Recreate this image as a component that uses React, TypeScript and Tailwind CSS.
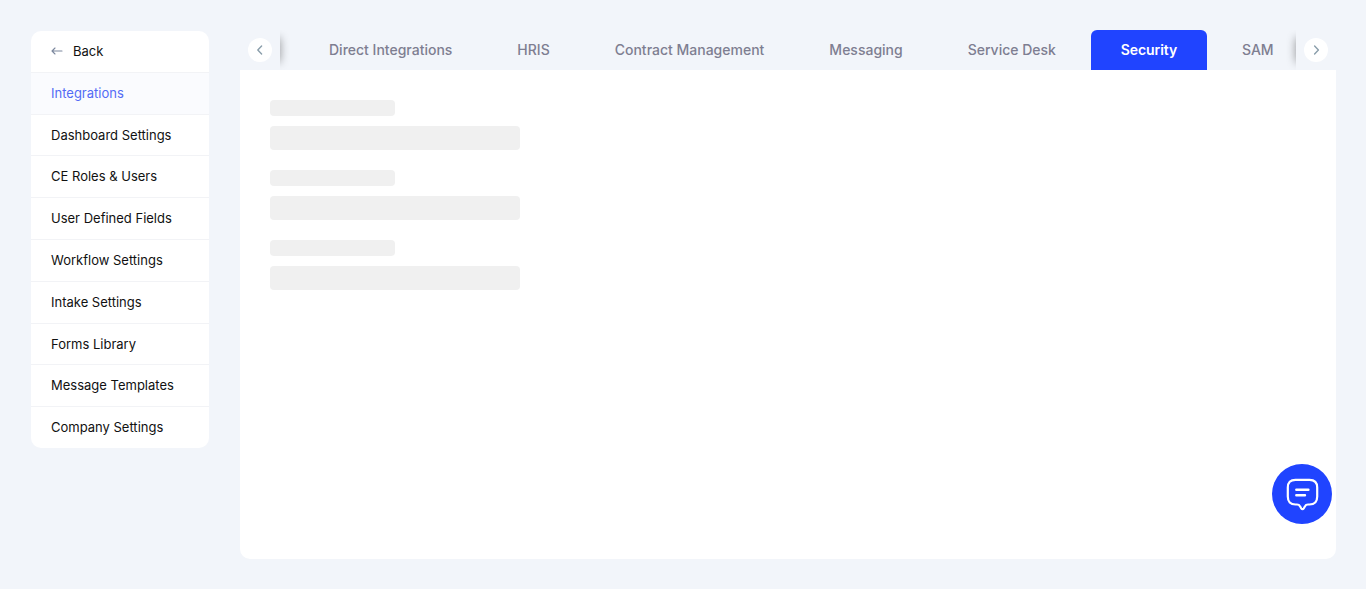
import React from "react";

const menu = [
  "Integrations",
  "Dashboard Settings",
  "CE Roles & Users",
  "User Defined Fields",
  "Workflow Settings",
  "Intake Settings",
  "Forms Library",
  "Message Templates",
  "Company Settings",
];

const tabs = [
  "Direct Integrations",
  "HRIS",
  "Contract Management",
  "Messaging",
  "Service Desk",
  "Security",
  "SAM",
];

function Chevron({ d }: { d: string }) {
  return (
    <button className="flex size-6 items-center justify-center rounded-full bg-white">
      <svg width="10" height="12" viewBox="0 0 10 12" fill="none" stroke="#8a9eab" strokeWidth="1.4" strokeLinecap="round" strokeLinejoin="round">
        <path d={d} />
      </svg>
    </button>
  );
}

function Sidebar() {
  return (
    <nav className="m-px w-[178px] shrink-0 self-start overflow-hidden rounded-[10px] bg-white text-[13px] leading-[20.8px] text-[#111]">
      <a className="flex items-center border-b border-[#f2f3f6] px-5 py-2.5">
        <svg className="mr-2.5" width="12" height="10" viewBox="0 0 12 10" fill="none" stroke="#7c889e" strokeWidth="1.1" strokeLinecap="round" strokeLinejoin="round">
          <path d="M11 5H1M4 2L1 5L4 8" />
        </svg>
        Back
      </a>
      {menu.map((m, i) => (
        <a
          key={m}
          className={
            "block border-[#f2f3f6] px-5 py-2.5 " +
            (i === 0 ? "bg-[#fafbfe] text-[#536bf5] " : "") +
            (i < menu.length - 1 ? "border-b" : "")
          }
        >
          {m}
        </a>
      ))}
    </nav>
  );
}

function TabBar() {
  return (
    <div className="flex h-10">
      <div className="flex w-10 shrink-0 items-center justify-center">
        <Chevron d="M6.6 2L2.8 6L6.6 10" />
      </div>
      <div className="relative flex min-w-0 flex-1 gap-[5px] overflow-hidden pl-[19px]">
        {tabs.map((t) => (
          <div
            key={t}
            className={
              "flex shrink-0 items-center text-sm whitespace-nowrap " +
              (t === "Security"
                ? "w-[116px] justify-center rounded-t-[6px] bg-[#2044ff] font-semibold tracking-[-0.05px] text-white"
                : "px-[30px] font-medium text-[#7e7e91]")
            }
          >
            {t}
          </div>
        ))}
        <div className="absolute top-2 -left-2.5 h-6 w-2.5 shadow-[0_0_10px_rgba(0,0,0,0.4)]" />
        <div className="absolute top-2 -right-2.5 h-6 w-2.5 shadow-[0_0_10px_rgba(0,0,0,0.4)]" />
      </div>
      <div className="flex w-10 shrink-0 items-center justify-center">
        <Chevron d="M3.6 2L7.4 6L3.6 10" />
      </div>
    </div>
  );
}

export default function App() {
  return (
    <div className="flex h-[589px] gap-[30px] bg-[#f2f5fa] p-[30px] font-['Inter',sans-serif]">
      <Sidebar />
      <main className="flex min-w-0 flex-1 flex-col">
        <TabBar />
        <section className="flex flex-1 flex-col gap-5 rounded-b-[10px] bg-white p-[30px]">
          {[0, 1, 2].map((i) => (
            <div key={i} className="flex flex-col gap-2.5">
              <div className="h-4 w-[125px] rounded bg-[#f0f0f0]" />
              <div className="h-6 w-[250px] rounded bg-[#f0f0f0]" />
            </div>
          ))}
        </section>
      </main>
      <button className="fixed top-[464px] left-[1272px] flex size-[60px] items-center justify-center rounded-full bg-[#2044ff]">
        <svg width="34" height="34" viewBox="0 0 34 34" fill="none" stroke="white" strokeWidth="2.2" strokeLinecap="round" strokeLinejoin="round">
          <path d="M10.5 2.8H24.5Q32.2 2.8 32.2 10.5V19.5Q32.2 27.5 24.5 27.5H23C21.2 27.5 20.6 28 20 29.2L18.8 31.3Q17.5 33 16.2 31.3L15 29.2C14.4 28 13.8 27.5 12 27.5H10.5Q2.8 27.5 2.8 19.5V10.5Q2.8 2.8 10.5 2.8Z" />
          <path d="M11.3 12.7H23.4M11.3 18.3H20" strokeWidth="2.4" />
        </svg>
      </button>
    </div>
  );
}
